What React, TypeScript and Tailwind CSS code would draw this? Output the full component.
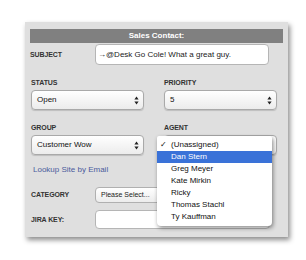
import React from 'react';

const font = { fontFamily: '"Liberation Sans", Arial, sans-serif' };

function Arrows() {
  return (
    <svg width="5" height="9" viewBox="0 0 5 9" className="shrink-0">
      <path d="M2.5 0.5 L4.6 3.6 L0.4 3.6 Z" fill="#222" />
      <path d="M2.5 8.5 L4.6 5.4 L0.4 5.4 Z" fill="#222" />
    </svg>
  );
}

function Select({ value, className = '' }: { value: string; className?: string }) {
  return (
    <div
      className={`flex items-center justify-between rounded-[4px] border border-[#a9a9a9] bg-gradient-to-b from-white to-[#ececec] shadow-[0_1px_1px_rgba(0,0,0,0.15)] pl-[5px] pr-[4px] text-[8px] text-[#111] ${className}`}
    >
      <span>{value}</span>
      <Arrows />
    </div>
  );
}

const Label = ({ children }: { children: React.ReactNode }) => (
  <div className="text-[7px] font-bold leading-[8px] h-[8px] text-[#333] tracking-[-0.1px]">{children}</div>
);

const agents = ['Dan Stern', 'Greg Meyer', 'Kate Mirkin', 'Ricky', 'Thomas Stachl', 'Ty Kauffman'];

export default function App() {
  return (
    <div className="w-[306px] h-[260px] bg-white pt-[22px] pl-[25px]" style={font}>
      <div className="w-[263px] h-[215px] bg-[#dfdfdf] shadow-[2px_3px_5px_rgba(0,0,0,0.45)] px-[5px] pt-[7px]">
        {/* Header */}
        <div className="h-[14px] bg-[#808080] text-white text-[8px] font-bold leading-[14px] text-center">
          Sales Contact:
        </div>

        {/* Subject */}
        <div className="mt-[1px] flex items-center">
          <div className="w-[65px]">
            <Label>SUBJECT</Label>
          </div>
          <div className="w-[174px] h-[21px] bg-white rounded-[4px] border border-[#b5b5b5] flex items-center pl-[2px] text-[8px] text-[#222]">
            →@Desk Go Cole! What a great guy.
          </div>
        </div>

        {/* Status / Priority */}
        <div className="mt-[14px] grid grid-cols-[113px_113px] gap-x-[20px] pl-[1px]">
          <div>
            <Label>STATUS</Label>
            <Select value="Open" className="mt-[3px] h-[20px]" />
          </div>
          <div>
            <Label>PRIORITY</Label>
            <Select value="5" className="mt-[3px] h-[20px]" />
          </div>
        </div>

        {/* Group / Agent */}
        <div className="mt-[14px] grid grid-cols-[113px_113px] gap-x-[20px] pl-[1px]">
          <div>
            <Label>GROUP</Label>
            <Select value="Customer Wow" className="mt-[3px] h-[20px]" />
          </div>
          <div className="relative">
            <Label>AGENT</Label>
            <Select value="(Unassigned)" className="mt-[3px] h-[20px]" />
            {/* open dropdown menu */}
            <div className="absolute left-[-7px] top-[12px] z-10 w-[115px] bg-white rounded-b-[4px] rounded-t-[2px] shadow-[1px_2px_4px_rgba(0,0,0,0.45)] pt-[2px] pb-[3px] text-[8px] text-[#111]">
              <div className="relative h-[13px] leading-[13px] pl-[14px]">
                <span className="absolute left-[3px] top-0">✓</span>
                (Unassigned)
              </div>
              {agents.map((a, i) => (
                <div
                  key={a}
                  className={`h-[12px] leading-[12px] pl-[14px] ${i === 0 ? 'bg-[#3a72d8] text-white' : ''}`}
                >
                  {a}
                </div>
              ))}
            </div>
          </div>
        </div>

        {/* Lookup link */}
        <div className="mt-[10px] pl-[3px] text-[8px] leading-[10px] text-[#4a5b9c]">Lookup Site by Email</div>

        {/* Category */}
        <div className="mt-[12px] flex items-center">
          <div className="w-[65px] pl-[1px]">
            <Label>CATEGORY</Label>
          </div>
          <div className="w-[175px] h-[16px] rounded-[4px] border border-[#b0b0b0] bg-gradient-to-b from-white to-[#ececec] flex items-center justify-between pl-[5px] pr-[5px] text-[7px] text-[#222]">
            <span>Please Select...</span>
            <Arrows />
          </div>
        </div>

        {/* Jira key */}
        <div className="mt-[7px] flex items-center">
          <div className="w-[65px] pl-[1px]">
            <Label>JIRA KEY:</Label>
          </div>
          <div className="w-[175px] h-[19px] bg-white rounded-[4px] border border-[#b5b5b5]" />
        </div>
      </div>
    </div>
  );
}
